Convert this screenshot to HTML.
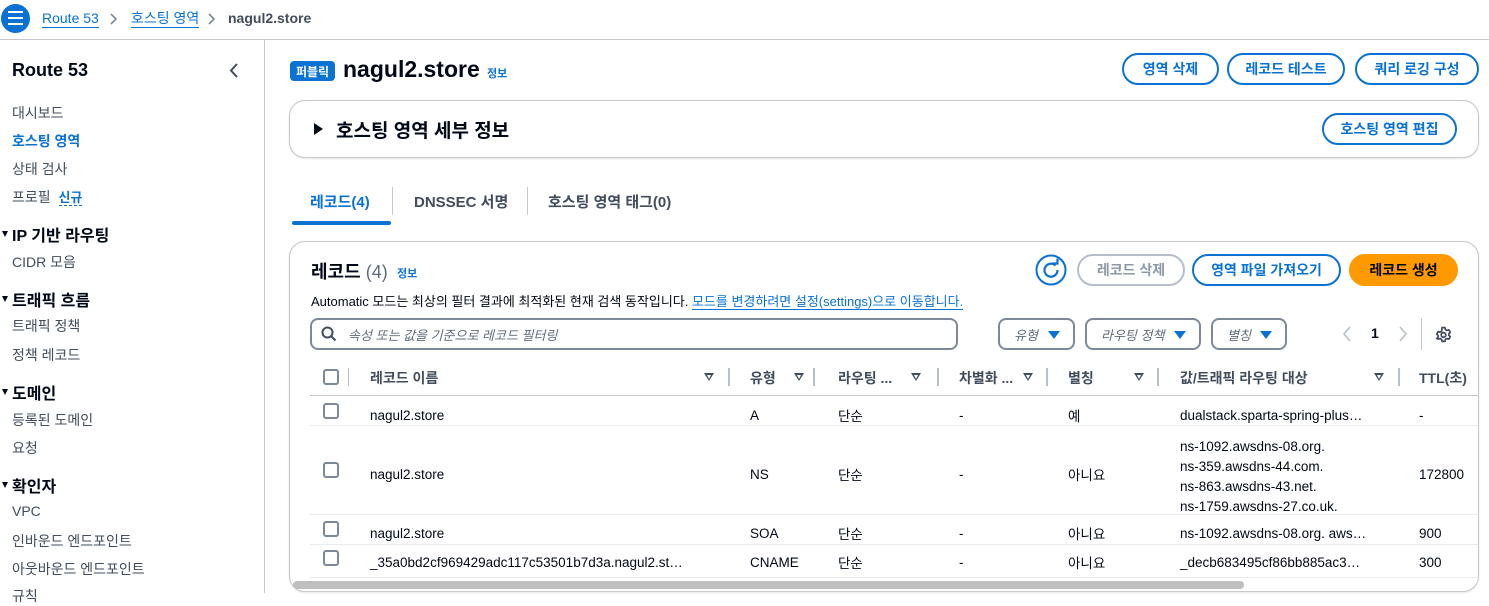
<!DOCTYPE html>
<html><head><meta charset="utf-8">
<style>
*{box-sizing:border-box;margin:0;padding:0}
body{width:1489px;height:593px;overflow:hidden;background:#fff;font-family:"Liberation Sans","Noto Sans CJK KR",sans-serif;color:#000716;position:relative;font-size:14px}
.a{position:absolute;white-space:nowrap}
.bl{color:#0972d3}
.b{font-weight:bold}
.btn{position:absolute;border:2px solid #0972d3;border-radius:20px;color:#0972d3;font-weight:bold;font-size:14px;display:flex;align-items:center;justify-content:center}
.nav{position:absolute;left:12px;font-size:14px;color:#414d5c}
.sec{position:absolute;left:12px;font-size:16px;font-weight:bold;color:#000716}
.sec:before{content:"";position:absolute;left:-10px;top:9px;border-left:3.5px solid transparent;border-right:3.5px solid transparent;border-top:6px solid #000716}
.t{position:absolute;font-size:13.5px;color:#000716;white-space:nowrap}
.k{margin-top:-3px}
.th{position:absolute;font-size:14px;font-weight:bold;color:#414d5c;top:368px;white-space:nowrap}
.dv{position:absolute;top:368px;width:2px;height:18px;background:#b6bec9}
.st{position:absolute;top:373px;border-left:5px solid transparent;border-right:5px solid transparent;border-top:8px solid #414d5c}
.st:after{content:"";position:absolute;left:-2.5px;top:-6.5px;border-left:2.5px solid transparent;border-right:2.5px solid transparent;border-top:4px solid #fff}
.cb{position:absolute;left:323px;width:16px;height:16px;border:2px solid #7d8998;border-radius:3px}
.hl{position:absolute;left:310px;width:1168px;height:1px;background:#e9ebed}
.flt{position:absolute;top:318px;height:32px;border:2px solid #7d8998;border-radius:8px;font-style:italic;color:#5f6b7a;font-size:13px;display:flex;align-items:center;padding-left:14px}
.flt i{position:absolute;right:13px;top:11px;border-left:6px solid transparent;border-right:6px solid transparent;border-top:8px solid #0972d3}
</style></head><body>
<!-- top bar -->
<div class="a" style="left:0;top:39px;width:1489px;height:1px;background:#c6c6cd"></div>
<div class="a" style="left:1px;top:4px;width:29px;height:29px;border-radius:50%;background:#0972d3"></div>
<div class="a" style="left:8px;top:11px;width:15px;height:2px;background:#fff;box-shadow:0 6px 0 #fff,0 12px 0 #fff"></div>
<div class="a bl" style="left:42px;top:10px;font-size:14px;border-bottom:1px solid #0972d3;line-height:17px">Route 53</div>
<svg class="a" style="left:110px;top:13px" width="8" height="12"><path d="M1 1l5 5-5 5" stroke="#7d8998" stroke-width="1.6" fill="none"/></svg>
<div class="a bl" style="left:131px;top:10px;font-size:14px;border-bottom:1px solid #0972d3;line-height:17px">호스팅 영역</div>
<svg class="a" style="left:208px;top:13px" width="8" height="12"><path d="M1 1l5 5-5 5" stroke="#7d8998" stroke-width="1.6" fill="none"/></svg>
<div class="a b" style="left:228px;top:10px;font-size:14px;color:#414d5c;line-height:17px">nagul2.store</div>
<!-- sidebar -->
<div class="a" style="left:264px;top:40px;width:1px;height:553px;background:#c6c6cd"></div>
<div class="a b" style="left:12px;top:60px;font-size:18px">Route 53</div>
<svg class="a" style="left:229px;top:63px" width="10" height="15"><path d="M8 1L2 7.5 8 14" stroke="#414d5c" stroke-width="2" fill="none"/></svg>
<div class="nav" style="top:103px">대시보드</div>
<div class="nav bl" style="top:131px;font-weight:bold;color:#0972d3">호스팅 영역</div>
<div class="nav" style="top:159px">상태 검사</div>
<div class="nav" style="top:187px">프로필 <span class="bl b" style="font-size:13px;border-bottom:1px dashed #0972d3;margin-left:4px">신규</span></div>
<div class="sec" style="top:222px">IP 기반 라우팅</div>
<div class="nav" style="top:252px">CIDR 모음</div>
<div class="sec" style="top:287px">트래픽 흐름</div>
<div class="nav" style="top:316px">트래픽 정책</div>
<div class="nav" style="top:345px">정책 레코드</div>
<div class="sec" style="top:380px">도메인</div>
<div class="nav" style="top:410px">등록된 도메인</div>
<div class="nav" style="top:438px">요청</div>
<div class="sec" style="top:473px">확인자</div>
<div class="nav" style="top:503px">VPC</div>
<div class="nav" style="top:531px">인바운드 엔드포인트</div>
<div class="nav" style="top:559px">아웃바운드 엔드포인트</div>
<div class="nav" style="top:586px">규칙</div>
<!-- header -->
<div class="a b" style="left:290px;top:61px;width:45px;height:20px;background:#0972d3;color:#fff;border-radius:4px;font-size:12px;display:flex;align-items:center;justify-content:center">퍼블릭</div>
<div class="a b" style="left:343px;top:56px;font-size:23px">nagul2.store</div>
<div class="a bl b" style="left:487px;top:65px;font-size:11px">정보</div>
<div class="btn" style="left:1122px;top:53px;width:97px;height:32px">영역 삭제</div>
<div class="btn" style="left:1227px;top:53px;width:118px;height:32px">레코드 테스트</div>
<div class="btn" style="left:1355px;top:53px;width:124px;height:32px">쿼리 로깅 구성</div>
<!-- detail panel -->
<div class="a" style="left:289px;top:100px;width:1190px;height:58px;border:1px solid #c6c6cd;border-radius:16px;box-shadow:0 1px 2px rgba(0,7,22,.1)"></div>
<div class="a" style="left:314px;top:123px;border-top:6px solid transparent;border-bottom:6px solid transparent;border-left:9px solid #000716"></div>
<div class="a b" style="left:336px;top:116px;font-size:19px">호스팅 영역 세부 정보</div>
<div class="btn" style="left:1322px;top:113px;width:135px;height:32px">호스팅 영역 편집</div>
<!-- tabs -->
<div class="a b bl" style="left:310px;top:191px;font-size:15px">레코드(4)</div>
<div class="a" style="left:292px;top:221px;width:99px;height:4px;background:#0972d3;border-radius:2px"></div>
<div class="a" style="left:392px;top:187px;width:1px;height:28px;background:#c6c6cd"></div>
<div class="a b" style="left:414px;top:191px;font-size:15px;color:#414d5c">DNSSEC 서명</div>
<div class="a" style="left:527px;top:187px;width:1px;height:28px;background:#c6c6cd"></div>
<div class="a b" style="left:548px;top:191px;font-size:15px;color:#414d5c">호스팅 영역 태그(0)</div>
<!-- records panel -->
<div class="a" style="left:289px;top:241px;width:1190px;height:351px;border:1px solid #c6c6cd;border-radius:16px;box-shadow:0 1px 2px rgba(0,7,22,.1)"></div>
<div class="a" style="left:311px;top:258px;font-size:18px"><b>레코드</b> <span style="color:#5f6b7a">(4)</span></div>
<div class="a bl b" style="left:397px;top:265px;font-size:11px">정보</div>
<div class="a" style="left:311px;top:291px;font-size:13px;color:#000716">Automatic 모드는 최상의 필터 결과에 최적화된 현재 검색 동작입니다. <span class="bl" style="border-bottom:1px solid #0972d3">모드를 변경하려면 설정(settings)으로 이동합니다.</span></div>
<svg class="a" style="left:1035px;top:254px" width="32" height="32"><circle cx="16" cy="16" r="14.5" fill="none" stroke="#0972d3" stroke-width="2"/><path d="M20.5 11.5A6.5 6.5 0 1 0 22.5 16" fill="none" stroke="#0972d3" stroke-width="2.2"/><path d="M17 9.5h5.5v-5" fill="none" stroke="#0972d3" stroke-width="2.2"/></svg>
<div class="btn" style="left:1077px;top:254px;width:108px;height:32px;border-color:#b6bec9;color:#8d99a8">레코드 삭제</div>
<div class="btn" style="left:1192px;top:254px;width:149px;height:32px">영역 파일 가져오기</div>
<div class="btn" style="left:1349px;top:254px;width:109px;height:32px;background:#ff9900;border-color:#ff9900;color:#000716">레코드 생성</div>
<!-- search -->
<div class="a" style="left:310px;top:318px;width:648px;height:32px;border:2px solid #7d8998;border-radius:8px"></div>
<svg class="a" style="left:321px;top:326px" width="16" height="16"><circle cx="6.5" cy="6.5" r="5" fill="none" stroke="#414d5c" stroke-width="2"/><path d="M10 10l4.5 4.5" stroke="#414d5c" stroke-width="2"/></svg>
<div class="a" style="left:348px;top:325px;font-size:13px;font-style:italic;color:#5f6b7a">속성 또는 값을 기준으로 레코드 필터링</div>
<div class="flt" style="left:998px;width:77px">유형<i></i></div>
<div class="flt" style="left:1085px;width:116px">라우팅 정책<i></i></div>
<div class="flt" style="left:1211px;width:76px">별칭<i></i></div>
<svg class="a" style="left:1342px;top:326px" width="10" height="16"><path d="M8 1L2 8l6 7" stroke="#b6bec9" stroke-width="1.6" fill="none"/></svg>
<div class="a b" style="left:1371px;top:325px;font-size:14px">1</div>
<svg class="a" style="left:1398px;top:326px" width="10" height="16"><path d="M2 1l6 7-6 7" stroke="#b6bec9" stroke-width="1.6" fill="none"/></svg>
<div class="a" style="left:1421px;top:318px;width:1px;height:32px;background:#c6c6cd"></div>
<svg class="a" style="left:1435px;top:326px" width="17" height="17" viewBox="0 0 16 16"><path d="M6.6 1.5h2.8l.4 1.9 1.4.8 1.8-.6 1.4 2.4-1.4 1.3v1.4l1.4 1.3-1.4 2.4-1.8-.6-1.4.8-.4 1.9H6.6l-.4-1.9-1.4-.8-1.8.6L1.6 11.6 3 10.3V8.9L1.6 7.6 3 5.2l1.8.6 1.4-.8z" fill="none" stroke="#414d5c" stroke-width="1.6" stroke-linejoin="round"/><circle cx="8" cy="8.4" r="2.2" fill="none" stroke="#414d5c" stroke-width="1.6"/></svg>
<!-- table header -->
<div class="cb" style="top:369px"></div>
<div class="dv" style="left:348px;width:1px"></div>
<div class="th" style="left:370px">레코드 이름</div><div class="st" style="left:704px"></div><div class="dv" style="left:728px"></div>
<div class="th" style="left:750px">유형</div><div class="st" style="left:794px"></div><div class="dv" style="left:813px"></div>
<div class="th" style="left:838px">라우팅 ...</div><div class="st" style="left:911px"></div><div class="dv" style="left:937px"></div>
<div class="th" style="left:959px">차별화 ...</div><div class="st" style="left:1023px"></div><div class="dv" style="left:1046px"></div>
<div class="th" style="left:1068px">별칭</div><div class="st" style="left:1134px"></div><div class="dv" style="left:1157px"></div>
<div class="th" style="left:1180px">값/트래픽 라우팅 대상</div><div class="st" style="left:1374px"></div><div class="dv" style="left:1398px"></div>
<div class="th" style="left:1419px">TTL(초)</div>
<div class="hl" style="top:395px;background:#c6c6cd"></div>
<!-- rows -->
<div class="cb" style="top:403px"></div>
<div class="t" style="left:370px;top:408px">nagul2.store</div><div class="t" style="left:750px;top:408px">A</div><div class="t k" style="left:838px;top:408px">단순</div><div class="t" style="left:959px;top:408px">-</div><div class="t k" style="left:1068px;top:408px">예</div><div class="t" style="left:1180px;top:408px">dualstack.sparta-spring-plus…</div><div class="t" style="left:1419px;top:408px">-</div>
<div class="hl" style="top:425px"></div>
<div class="cb" style="top:462px"></div>
<div class="t" style="left:370px;top:467px">nagul2.store</div><div class="t" style="left:750px;top:467px">NS</div><div class="t k" style="left:838px;top:467px">단순</div><div class="t" style="left:959px;top:467px">-</div><div class="t k" style="left:1068px;top:467px">아니요</div>
<div class="t" style="left:1180px;top:437px;line-height:20px">ns-1092.awsdns-08.org.<br>ns-359.awsdns-44.com.<br>ns-863.awsdns-43.net.<br>ns-1759.awsdns-27.co.uk.</div><div class="t" style="left:1419px;top:467px">172800</div>
<div class="hl" style="top:514px"></div>
<div class="cb" style="top:521px"></div>
<div class="t" style="left:370px;top:526px">nagul2.store</div><div class="t" style="left:750px;top:526px">SOA</div><div class="t k" style="left:838px;top:526px">단순</div><div class="t" style="left:959px;top:526px">-</div><div class="t k" style="left:1068px;top:526px">아니요</div><div class="t" style="left:1180px;top:526px">ns-1092.awsdns-08.org. aws…</div><div class="t" style="left:1419px;top:526px">900</div>
<div class="hl" style="top:544px"></div>
<div class="cb" style="top:550px"></div>
<div class="t" style="left:370px;top:555px">_35a0bd2cf969429adc117c53501b7d3a.nagul2.st…</div><div class="t" style="left:750px;top:555px">CNAME</div><div class="t k" style="left:838px;top:555px">단순</div><div class="t" style="left:959px;top:555px">-</div><div class="t k" style="left:1068px;top:555px">아니요</div><div class="t" style="left:1180px;top:555px">_decb683495cf86bb885ac3…</div><div class="t" style="left:1419px;top:555px">300</div>
<div class="hl" style="top:577px"></div>
<div class="a" style="left:293px;top:581px;width:951px;height:8px;background:#bfbfbf;border-radius:4px"></div>
</body></html>
